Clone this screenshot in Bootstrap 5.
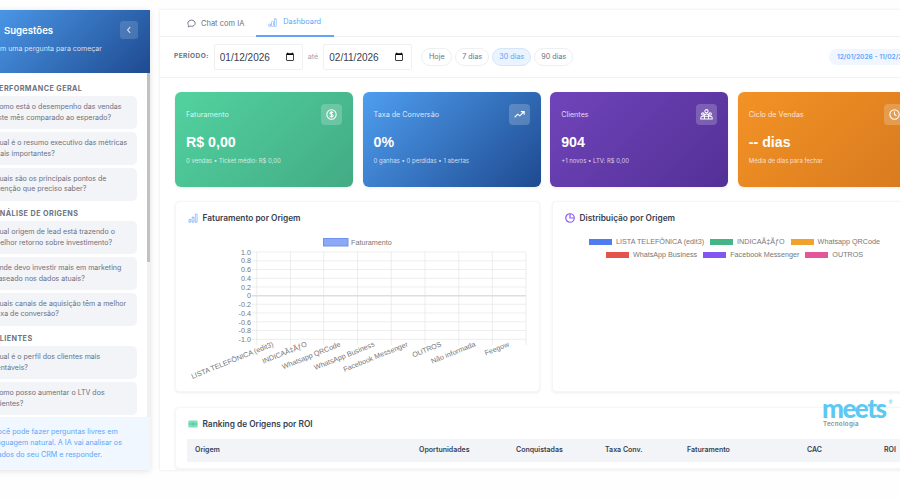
<!DOCTYPE html>
<html lang="pt-BR">
<head>
<meta charset="utf-8">
<title>Sugestões e Dashboard</title>
<link rel="stylesheet" href="https://cdn.jsdelivr.net/npm/bootstrap@5.3.0/dist/css/bootstrap.min.css">
<style>
html,body{height:500px;overflow:hidden;background:#fefefe}
body{font-family:Inter,"Liberation Sans",sans-serif;color:#374151}
.stage{width:956px;height:480px;margin-left:-24px;padding-top:10px;gap:10px}
.side{width:174px;height:460px;background:#fff;box-shadow:0 1px 6px rgba(0,0,0,.12);flex:none}
.side-head{height:63px;padding:11px 12px 0 28px;background:linear-gradient(135deg,#4f9ef0,#1e4a90);color:#fff}
.side-title{font-size:9.6px;font-weight:600;line-height:16px;margin-top:2px}
.side-sub{font-size:7px;line-height:10px;margin-top:5px;margin-left:-31px;color:rgba(255,255,255,.8);white-space:nowrap}
.side-back{width:18px;height:18px;background:rgba(255,255,255,.15);border-radius:3px;flex:none}
.side-list{height:344px;overflow:hidden;padding:10.500px 13px 0 10px;background:linear-gradient(#c1c1c1,#c1c1c1) right top/3.400px 189px no-repeat,linear-gradient(#f1f1f1,#f1f1f1) right top/3.400px 100% no-repeat}
.group-label{font-size:7.2px;font-weight:700;letter-spacing:.43px;color:#6b7280;line-height:9px;margin:0 0 3.500px;padding-left:8px;text-transform:uppercase}
.group-label.later{margin-top:7.500px}
.ask{display:block;width:100%;border:0;background:#f3f4f8;color:#6b7280;font-size:7.050px;line-height:10.800px;text-align:left;border-radius:4.800px;padding:5.850px 6px 5.850px 8px;margin-bottom:2.600px}
.side-tip{height:53px;background:#f0f7ff;color:#60a5fa;font-size:7.200px;line-height:11.400px;padding:9px 12px 0 17px}
.main{flex:1;height:460px;background:#fff;box-shadow:0 0 3px rgba(0,0,0,.1);overflow:hidden}
.tabs{height:27px;border-bottom:1px solid #f0f0f2;padding-left:15px}
.tab{font-size:7.500px;color:#6b7280;display:flex;align-items:center;gap:5px;padding:0 12px;height:27px;text-decoration:none}
.tab.on{color:#60a5fa;border-bottom:2px solid #60a5fa;font-size:7.300px;gap:6px;padding-right:13px}
.filters{height:41px;border-bottom:1px solid #f2f2f4;padding:0 9px 0 14px}
.per{font-size:6.600px;font-weight:700;letter-spacing:.4px;color:#6b7280;margin-right:5px}
.when{width:89px;height:26px;font-size:10px;padding:0 5px;border:1px solid #f0f0f2;border-radius:2px;color:#374151;font-family:"Liberation Sans",sans-serif}
.ate{font-size:7.200px;color:#9ca3af;margin:0 5px}
.chip{font-size:7.200px;line-height:1;padding:0;height:18px;border:1px solid #eeeff1;border-radius:9px;background:#fff;color:#6b7280;margin-right:3px}
.chip.w1{width:31px;margin-left:9px}.chip.w2{width:34px}.chip.w3{width:39px}.chip.w4{width:39px}
.chip.on{background:#eaf3fe;border-color:#d5e6fb;color:#60a5fa}
.range{font-size:6.600px;font-weight:600;color:#60a5fa;background:#eff6ff;border-radius:8px;height:16px;line-height:16px;padding:0 8px;margin-left:auto;white-space:nowrap}
.body{padding:14px 15px 0}
.kpis{display:grid;grid-template-columns:repeat(4,178px);gap:9.600px}
.kpi{height:95px;border-radius:6px;color:#fff;padding:12px 11px;box-shadow:0 1px 3px rgba(0,0,0,.08)}
.k1{background:linear-gradient(135deg,#52d29f,#43ab85)}
.k2{background:linear-gradient(135deg,#4f9ef0,#1e4a90)}
.k3{background:linear-gradient(135deg,#7044ba,#533096)}
.k4{background:linear-gradient(135deg,#f39225,#d77a1f)}
.kpi-name{font-size:7.200px;color:rgba(255,255,255,.8);margin-top:5px;line-height:11px}
.kpi-ico{width:21px;height:21px;border-radius:4px;background:rgba(255,255,255,.2);flex:none}
.kpi-val{font-size:14.200px;font-weight:700;line-height:18px;margin-top:8px;font-family:"Liberation Sans",sans-serif}
.kpi-sub{font-size:6px;color:rgba(255,255,255,.75);line-height:9px;margin-top:5px}
.charts{display:grid;grid-template-columns:365px 365px;gap:12px;margin-top:14px}
.pane{background:#fff;border:1px solid #f6f6f7;border-radius:4px;box-shadow:0 1px 3px rgba(0,0,0,.07)}
.pane-chart{height:191px}
.pane-title{font-size:8.300px;font-weight:600;color:#374151;display:flex;align-items:center;gap:5px;line-height:12px;padding:10px 12px 0 11.500px}
.lg{gap:2.500px 6px;padding:13px 20px 0;font-size:7.200px;color:#777;font-family:"Liberation Sans",sans-serif;line-height:10px}
.lg span{display:inline-flex;align-items:center;gap:4px}
.lg i{display:block;width:23px;height:6px}
.plot{display:block;margin-top:10px}
.plot text{font-family:"Liberation Sans",sans-serif;font-size:7.200px;fill:#777}
.pane-rank{margin-top:15px;height:62px}
.rank{margin:9px 11px 0;width:calc(100% - 22px);font-size:7px;border-collapse:collapse}
.rank th{background:#f3f4f8;height:23px;font-weight:600;color:#374151;padding:0;white-space:nowrap}
.logo{position:absolute;left:822px;top:395px;width:78px;line-height:1;font-family:Lato,"Open Sans",sans-serif}
.logo b{display:block;font-size:26px;font-weight:900;letter-spacing:-1.500px;color:#5cc8f3;line-height:26px}
.logo small{display:block;font-size:6.200px;font-weight:600;color:#868e96;letter-spacing:.3px;line-height:7px;margin-top:-1px;padding-left:1px;font-family:Inter,sans-serif}
.logo sup{position:absolute;left:66.500px;top:7px;font-size:5px;color:#5cc8f3}
</style>
</head>
<body>
<div class="stage d-flex">
  <aside class="side d-flex flex-column">
    <div class="side-head">
      <div class="d-flex justify-content-between">
        <div class="side-title">Sugestões</div>
        <div class="side-back d-flex align-items-center justify-content-center">
          <svg width="8" height="8" viewBox="0 0 8 8" fill="none" stroke="#fff" stroke-opacity=".8" stroke-width="1.1"><path d="M5.2 1.2 2.6 4l2.6 2.8"/></svg>
        </div>
      </div>
      <div class="side-sub">Clique em uma pergunta para começar</div>
    </div>
    <div class="side-list flex-grow-1">
      <div class="group-label">Performance Geral</div>
      <button class="ask">Como está o desempenho das vendas este mês comparado ao esperado?</button>
      <button class="ask">Qual é o resumo executivo das métricas mais importantes?</button>
      <button class="ask">Quais são os principais pontos de atenção que preciso saber?</button>
      <div class="group-label later">Análise de Origens</div>
      <button class="ask">Qual origem de lead está trazendo o melhor retorno sobre investimento?</button>
      <button class="ask">Onde devo investir mais em marketing baseado nos dados atuais?</button>
      <button class="ask">Quais canais de aquisição têm a melhor taxa de conversão?</button>
      <div class="group-label later">Clientes</div>
      <button class="ask">Qual é o perfil dos clientes mais rentáveis?</button>
      <button class="ask">Como posso aumentar o LTV dos clientes?</button>
    </div>
    <div class="side-tip">Você pode fazer perguntas livres em linguagem natural. A IA vai analisar os dados do seu CRM e responder.</div>
  </aside>

  <main class="main">
    <nav class="tabs d-flex">
      <a class="tab" href="#">
        <svg width="9" height="9" viewBox="0 0 16 16" fill="none" stroke="currentColor" stroke-width="1.7"><path d="M8 2c3.600 0 6.500 2.400 6.500 5.500S11.600 13 8 13c-.8 0-1.600-.1-2.300-.4-.9.700-2.200 1.300-3.700 1.400.6-.8 1-1.700 1.100-2.700C2.100 10.300 1.500 9 1.500 7.500 1.500 4.400 4.400 2 8 2Z"/></svg>
        Chat com IA</a>
      <a class="tab on" href="#">
        <svg width="9" height="9" viewBox="0 0 16 16" fill="currentColor"><path d="M4 11H2v3h2v-3zm5-4H7v7h2V7zm5-5v12h-2V2h2zm-2-1a1 1 0 0 0-1 1v12a1 1 0 0 0 1 1h2a1 1 0 0 0 1-1V2a1 1 0 0 0-1-1h-2zM6 7a1 1 0 0 1 1-1h2a1 1 0 0 1 1 1v7a1 1 0 0 1-1 1H7a1 1 0 0 1-1-1V7zm-5 4a1 1 0 0 1 1-1h2a1 1 0 0 1 1 1v3a1 1 0 0 1-1 1H2a1 1 0 0 1-1-1v-3z"/></svg>
        Dashboard</a>
    </nav>
    <div class="filters d-flex align-items-center">
      <span class="per">PERÍODO:</span>
      <input class="when" type="date" value="2026-01-12" aria-label="Início">
      <span class="ate">até</span>
      <input class="when" type="date" value="2026-02-11" aria-label="Fim">
      <button class="chip w1">Hoje</button>
      <button class="chip w2">7 dias</button>
      <button class="chip w3 on">30 dias</button>
      <button class="chip w4">90 dias</button>
      <span class="range">12/01/2026 - 11/02/2026</span>
    </div>
    <div class="body">
      <div class="kpis">
        <div class="kpi k1">
          <div class="d-flex justify-content-between align-items-start"><div class="kpi-name">Faturamento</div>
            <div class="kpi-ico d-flex align-items-center justify-content-center"><svg width="11" height="11" viewBox="0 0 16 16" fill="none" stroke="#fff" stroke-width="1.5"><circle cx="8" cy="8" r="6.800"/><path d="M10.300 5.800C10 4.900 9.100 4.500 8 4.500c-1.300 0-2.300.6-2.300 1.700 0 2.500 4.700 1.100 4.700 3.600 0 1.100-1 1.700-2.400 1.700-1.200 0-2.200-.5-2.500-1.500M8 3.200v9.600"/></svg></div></div>
          <div class="kpi-val">R$ 0,00</div>
          <div class="kpi-sub">0 vendas • Ticket médio: R$ 0,00</div>
        </div>
        <div class="kpi k2">
          <div class="d-flex justify-content-between align-items-start"><div class="kpi-name">Taxa de Conversão</div>
            <div class="kpi-ico d-flex align-items-center justify-content-center"><svg width="11" height="11" viewBox="0 0 16 16" fill="none" stroke="#fff" stroke-width="1.600"><path d="M1 12l4.500-4.500 3 2.500L14.500 4M10 3.800h4.800v4.700"/></svg></div></div>
          <div class="kpi-val">0%</div>
          <div class="kpi-sub">0 ganhas • 0 perdidas • 1 abertas</div>
        </div>
        <div class="kpi k3">
          <div class="d-flex justify-content-between align-items-start"><div class="kpi-name">Clientes</div>
            <div class="kpi-ico d-flex align-items-center justify-content-center"><svg width="13" height="13" viewBox="0 0 16 16" fill="none" stroke="#fff" stroke-width="1.300"><circle cx="8" cy="4" r="2"/><circle cx="3.500" cy="7.500" r="1.500"/><circle cx="12.500" cy="7.500" r="1.500"/><path d="M5 10c0-1.500 1.300-2.500 3-2.500s3 1 3 2.500M1 13.500V12c0-1 .8-1.800 2.500-1.800h9c1.700 0 2.500.8 2.500 1.800v1.500H1ZM5.500 10.500v3M10.500 10.500v3"/></svg></div></div>
          <div class="kpi-val">904</div>
          <div class="kpi-sub">+1 novos • LTV: R$ 0,00</div>
        </div>
        <div class="kpi k4">
          <div class="d-flex justify-content-between align-items-start"><div class="kpi-name">Ciclo de Vendas</div>
            <div class="kpi-ico d-flex align-items-center justify-content-center"><svg width="11" height="11" viewBox="0 0 16 16" fill="none" stroke="#fff" stroke-width="1.500"><circle cx="8" cy="8" r="6.800"/><path d="M8 3.800V8l2.800 1.800"/></svg></div></div>
          <div class="kpi-val">-- dias</div>
          <div class="kpi-sub">Média de dias para fechar</div>
        </div>
      </div>

      <div class="charts">
        <section class="pane pane-chart">
          <div class="pane-title"><svg width="10" height="10" viewBox="0 0 16 16" fill="#60a5fa"><path d="M4 11H2v3h2v-3zm5-4H7v7h2V7zm5-5v12h-2V2h2zm-2-1a1 1 0 0 0-1 1v12a1 1 0 0 0 1 1h2a1 1 0 0 0 1-1V2a1 1 0 0 0-1-1h-2zM6 7a1 1 0 0 1 1-1h2a1 1 0 0 1 1 1v7a1 1 0 0 1-1 1H7a1 1 0 0 1-1-1V7zm-5 4a1 1 0 0 1 1-1h2a1 1 0 0 1 1 1v3a1 1 0 0 1-1 1H2a1 1 0 0 1-1-1v-3z"/></svg>Faturamento por Origem</div>
          <svg class="plot" width="363" height="152" viewBox="176 234 363 152" role="img" aria-label="Faturamento por Origem">
            <rect x="323.500" y="238.500" width="24.500" height="7.500" fill="#8ba9f5" stroke="#6f92f0"/>
            <text x="351" y="245.300">Faturamento</text>
            <g stroke="#e6e6e6" stroke-width=".7">
              <path d="M252 252h274M252 260.800h274M252 269.500h274M252 278.300h274M252 287h274M252 304.300h274M252 313h274M252 321.800h274M252 330.500h274M252 339.300h274"/>
              <path d="M256.700 252v93M290.500 252v93M323.700 252v93M357.500 252v93M391.300 252v93M425 252v93M458.700 252v93M492.300 252v93M526 252v93"/>
            </g>
            <path d="M252 295.700h274" stroke="#dedede" stroke-width="1.400"/>
            <g text-anchor="end">
              <text x="251" y="254.500">1.0</text><text x="251" y="263.200">0.8</text><text x="251" y="272">0.6</text><text x="251" y="280.800">0.4</text><text x="251" y="289.500">0.2</text><text x="251" y="298.200">0</text><text x="251" y="307">-0.2</text><text x="251" y="315.700">-0.4</text><text x="251" y="324.500">-0.6</text><text x="251" y="333.200">-0.8</text><text x="251" y="342">-1.0</text>
              <text transform="translate(274 346) rotate(-22)">LISTA TELEFÔNICA (edit3)</text>
              <text transform="translate(307.500 346) rotate(-22)">INDICAÃ‡ÃƒO</text>
              <text transform="translate(341 346) rotate(-22)">Whatsapp QRCode</text>
              <text transform="translate(375 346) rotate(-22)">WhatsApp Business</text>
              <text transform="translate(408.500 346) rotate(-22)">Facebook Messenger</text>
              <text transform="translate(442 346) rotate(-22)">OUTROS</text>
              <text transform="translate(476 346) rotate(-22)">Não informada</text>
              <text transform="translate(509.500 346) rotate(-22)">Feegow</text>
            </g>
          </svg>
        </section>
        <section class="pane pane-chart">
          <div class="pane-title"><svg width="10" height="10" viewBox="0 0 16 16" fill="none" stroke="#8b5cf6" stroke-width="1.900"><circle cx="8" cy="8" r="6.800"/><path d="M8 1.500V8h6.500"/></svg>Distribuição por Origem</div>
          <div class="lg d-flex flex-wrap justify-content-center">
            <span><i style="background:#4f7df0"></i>LISTA TELEFÔNICA (edit3)</span>
            <span><i style="background:#43b586"></i>INDICAÃ‡ÃƒO</span>
            <span><i style="background:#f0a22e"></i>Whatsapp QRCode</span>
            <span><i style="background:#e5544b"></i>WhatsApp Business</span>
            <span><i style="background:#8257ef"></i>Facebook Messenger</span>
            <span><i style="background:#e5559a"></i>OUTROS</span>
          </div>
        </section>
      </div>

      <section class="pane pane-rank">
        <div class="pane-title"><svg width="10" height="10" viewBox="0 0 16 16"><rect x=".5" y="2.500" width="15" height="11" rx="2" fill="#7fe0bb"/><path d="M1 8h14M8 5v6" stroke="#43b586" stroke-width="1"/></svg>Ranking de Origens por ROI</div>
        <table class="rank">
          <thead><tr>
            <th style="padding-left:8px;width:232px">Origem</th><th style="width:97px">Oportunidades</th><th style="width:89px">Conquistadas</th><th style="width:82px">Taxa Conv.</th><th style="width:120px">Faturamento</th><th style="width:77px">CAC</th><th>ROI</th>
          </tr></thead>
        </table>
      </section>
    </div>
  </main>
</div>
<div class="logo"><b>meets</b><sup>®</sup><small>Tecnologia</small></div>
<script src="https://cdn.jsdelivr.net/npm/bootstrap@5.3.0/dist/js/bootstrap.bundle.min.js"></script>
</body>
</html>
